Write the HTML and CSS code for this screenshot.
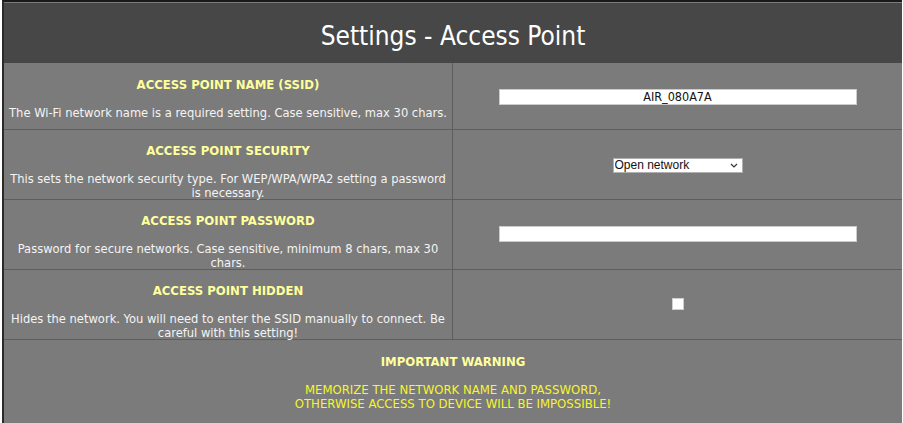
FILE: index.html
```html
<!DOCTYPE html>
<html>
<head>
<meta charset="utf-8">
<link rel="stylesheet" href="styles.css">
</head>
<body>
<div class="page">
  <div class="header">Settings - Access Point</div>
  <div class="row row-first">
    <div class="label">
      <div class="title">ACCESS POINT NAME (SSID)</div>
      <div class="desc">The Wi-Fi network name is a required setting. Case sensitive, max 30 chars.</div>
    </div>
    <div class="field"><input class="text" type="text" value="AIR_080A7A"></div>
  </div>
  <div class="row">
    <div class="label">
      <div class="title">ACCESS POINT SECURITY</div>
      <div class="desc">This sets the network security type. For WEP/WPA/WPA2 setting a password is necessary.</div>
    </div>
    <div class="field field-sel"><select class="sel"><option>Open network</option><option>WEP</option><option>WPA</option><option>WPA2</option></select></div>
  </div>
  <div class="row">
    <div class="label">
      <div class="title">ACCESS POINT PASSWORD</div>
      <div class="desc">Password for secure networks. Case sensitive, minimum 8 chars, max 30 chars.</div>
    </div>
    <div class="field"><input class="text" type="text" value=""></div>
  </div>
  <div class="row">
    <div class="label">
      <div class="title">ACCESS POINT HIDDEN</div>
      <div class="desc">Hides the network. You will need to enter the SSID manually to connect. Be careful with this setting!</div>
    </div>
    <div class="field field-check"><span class="check"></span></div>
  </div>
  <div class="warning">
    <div class="title">IMPORTANT WARNING</div>
    <div class="warn-text">MEMORIZE THE NETWORK NAME AND PASSWORD,<br>OTHERWISE ACCESS TO DEVICE WILL BE IMPOSSIBLE!</div>
  </div>
</div>
</body>
</html>
```

FILE: styles.css
```css
html, body {
  margin: 0;
  padding: 0;
  background: #ffffff;
}
body {
  font-family: "DejaVu Sans Condensed", "DejaVu Sans", sans-serif;
  font-size: 13px;
  color: #ffffff;
}
.page {
  width: 898px;
  margin-left: 2px;
  border-top: 2px solid #1a1a1a;
  padding-top: 1px;
  border-left: 2px solid #2a2a2a;
  height: 420px;
  overflow: hidden;
  background: #7b7b7b;
}
.header {
  background: #474747;
  height: 60px;
  box-sizing: border-box;
  padding-top: 3px;
  line-height: 60px;
  text-align: center;
  font-size: 26px;
  color: #ffffff;
}
.row {
  display: grid;
  grid-template-columns: 449px 1fr;
  height: 70px;
  box-sizing: border-box;
  border-bottom: 1px solid #5e5e5e;
}
.row-first {
  height: 67px;
}
.label {
  border-right: 1px solid #5e5e5e;
  text-align: center;
  padding: 14px 1px 0;
}
.row-first .label {
  padding-top: 15px;
}
.title {
  font-weight: bold;
  color: #ffff9c;
  line-height: 14px;
}
.desc {
  margin-top: 14px;
  line-height: 14px;
  font-size: 12.8px;
  color: #f4f4f4;
}
.field {
  display: flex;
  justify-content: center;
  align-items: flex-start;
}
.text {
  margin-top: 26px;
  width: 358px;
  height: 16px;
  box-sizing: border-box;
  border: 1px solid #cccccc;
  background: #ffffff;
  text-align: center;
  font-family: "DejaVu Sans Condensed", "DejaVu Sans", sans-serif;
  font-size: 12.5px;
  line-height: 13px;
  color: #111111;
  padding: 0 0 1px;
  outline: none;
}
.sel {
  -webkit-appearance: none;
  appearance: none;
  margin-top: 28px;
  width: 130px;
  height: 15px;
  box-sizing: border-box;
  font-family: "Liberation Sans", Arial, sans-serif;
  font-size: 12px;
  line-height: 13px;
  padding: 0 0 0 1px;
  border: 1px solid #b0b0b0;
  border-radius: 0;
  color: #111111;
  background: #ffffff url("data:image/svg+xml;utf8,<svg xmlns='http://www.w3.org/2000/svg' width='8' height='5'><path d='M1 1 L4 4 L7 1' fill='none' stroke='%23333' stroke-width='1.2'/></svg>") no-repeat right 4px center;
}
.field-check {
  padding-left: 0;
}
.check {
  display: block;
  margin-top: 28px;
  width: 12px;
  height: 12px;
  background: #ffffff;
  border: 1px solid #cfcfcf;
  box-sizing: border-box;
}
.warning {
  text-align: center;
  padding-top: 15px;
}
.warn-text {
  margin-top: 14px;
  color: #f6f62a;
  line-height: 14px;
}
```
